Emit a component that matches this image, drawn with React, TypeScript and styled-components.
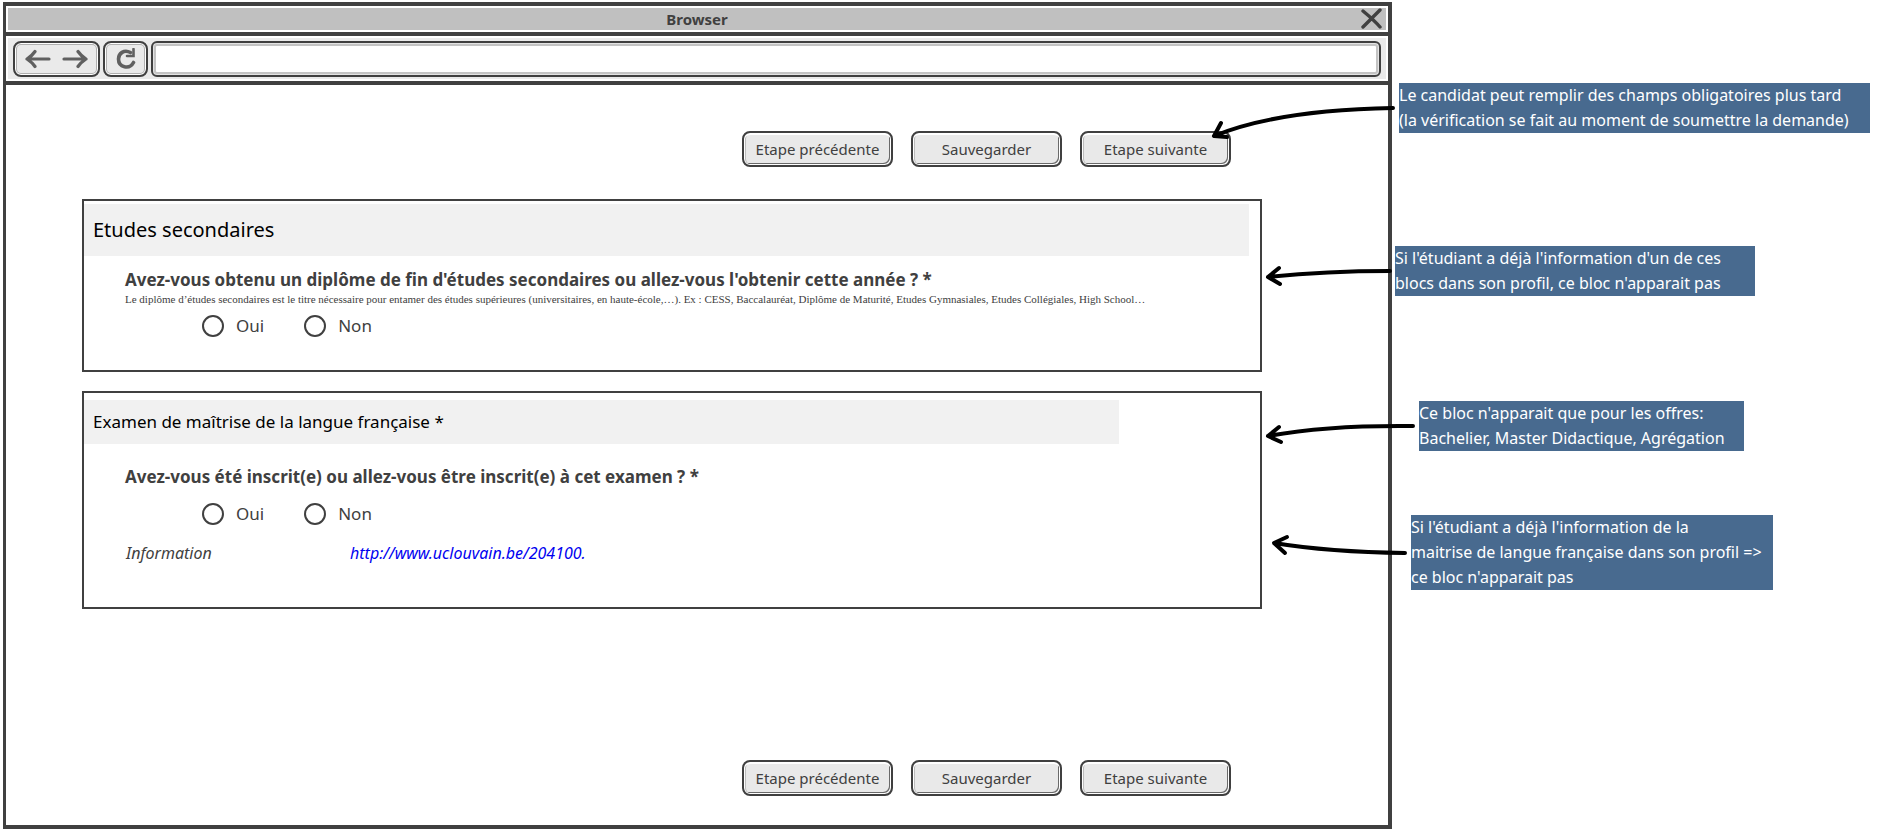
import React from "react";
import styled, { createGlobalStyle } from "styled-components";

const ink = "#404040";
const hand = `"Noto Sans", "Open Sans", sans-serif`;

const GlobalStyle = createGlobalStyle`
  *, *::before, *::after { box-sizing: border-box; }
  body { margin: 0; background: #fff; color: ${ink}; font-family: ${hand}; }
`;

const Page = styled.div`
  display: grid;
  grid-template-columns: minmax(0, 1fr) 496px;
  min-height: 100vh;
`;

const Frame = styled.main`
  display: flex;
  flex-direction: column;
  margin: 2px 0 5px 3px;
  border: solid ${ink};
  border-width: 4px 4px 4px 3px;
`;

const TitleBar = styled.header`
  display: grid;
  grid-template-columns: 28px 1fr 28px;
  align-items: center;
  height: 26px;
  border: 2px solid #fff;
  background: #c0c0c0;
`;

const WindowTitle = styled.h1`
  grid-column: 2;
  margin: 0;
  font-size: 15px;
  line-height: 22px;
  text-align: center;
`;

const IconButton = styled.button`
  display: flex;
  align-items: center;
  justify-content: center;
  padding: 0;
  border: 0;
  background: none;
  color: ${ink};
`;

const Toolbar = styled.div`
  display: flex;
  align-items: center;
  gap: 3px;
  height: 53px;
  padding: 0 7px;
  border: solid ${ink};
  border-width: 4px 0;
  box-shadow: inset 0 0 0 2px #fff;
  background: #eaeaea;
`;

const ToolGroup = styled.div<{ $width: number }>`
  display: flex;
  align-items: center;
  justify-content: space-evenly;
  width: ${(p) => p.$width}px;
  height: 36px;
  border: 2px solid ${ink};
  border-radius: 8px;
  box-shadow: inset 0 0 0 1px #fff, inset 0 0 0 2px #b0b0b0;
  color: #606060;

  ${IconButton} { color: inherit; }
`;

const Address = styled.input`
  flex: 1;
  min-width: 0;
  height: 36px;
  padding: 0 10px;
  border: 2px solid ${ink};
  border-radius: 6px;
  box-shadow: inset 0 0 0 1px #e4e4e4, inset 0 0 0 3px #c4c4c4;
  background: #fff;
  font: 16px ${hand};
`;

const Content = styled.div`
  flex: 1;
  display: flex;
  flex-direction: column;
  padding: 46px 126px 29px 76px;
`;

const Actions = styled.nav`
  display: flex;
  justify-content: flex-end;
  gap: 18px;
  padding-right: 31px;

  &:last-child { margin-top: auto; }
`;

const ActionButton = styled.button`
  width: 151px;
  height: 36px;
  padding: 0;
  border: 2px solid ${ink};
  border-radius: 8px;
  background: #e9e9e9;
  box-shadow: inset 0 2px 0 #fff, inset 1px 0 0 #fff, inset -1px -1px 0 #fff,
    inset 2px 0 0 #bdbdbd, inset -2px -2px 0 #6a6a6a;
  color: ${ink};
  font: 15px ${hand};
  white-space: nowrap;
`;

const Card = styled.section<{ $top: number; $bottom: number; $gap: number }>`
  margin-top: ${(p) => p.$gap}px;
  padding: ${(p) => p.$top}px 0 ${(p) => p.$bottom}px;
  border: 2px solid ${ink};
`;

const CardTitle = styled.h2<{ $size: number; $height: number; $right: number }>`
  margin: 0 ${(p) => p.$right}px 0 0;
  padding-left: 9px;
  background: #f1f1f1;
  color: #000;
  font-size: ${(p) => p.$size}px;
  font-weight: 400;
  line-height: ${(p) => p.$height}px;
`;

const Question = styled.fieldset<{ $top: number }>`
  margin: 0;
  padding: ${(p) => p.$top}px 0 0 41px;
  border: 0;
  min-width: 0;
`;

const Legend = styled.legend`
  float: left;
  width: 100%;
  padding: 0;
  font-size: 17px;
  font-weight: 700;
  line-height: 24px;
`;

const Hint = styled.p`
  clear: both;
  margin: 0;
  font: 11px/14px "Liberation Serif", serif;
`;

const Choices = styled.div<{ $gap: number }>`
  clear: both;
  display: flex;
  gap: 40px;
  padding: ${(p) => p.$gap}px 0 0 77px;
`;

const Choice = styled.label`
  display: flex;
  align-items: center;
  gap: 12px;
  font-size: 17px;
  line-height: 24px;
`;

const Radio = styled.input`
  appearance: none;
  width: 22px;
  height: 22px;
  margin: 0;
  border: 2px solid ${ink};
  border-radius: 50%;
  background: #fff;

  &:checked { box-shadow: inset 0 0 0 4px #fff; background: ${ink}; }
`;

const InfoRow = styled.div`
  display: grid;
  grid-template-columns: 224px 1fr;
  padding: 15px 0 0 42px;
  font-size: 16px;
  font-style: italic;
  line-height: 24px;
`;

const InfoLink = styled.a`
  color: #0000f0;
  text-decoration: none;
`;

const Notes = styled.aside`
  padding-top: 83px;
`;

const Note = styled.p<{ $indent: number; $width: number; $gap: number }>`
  position: relative;
  width: ${(p) => p.$width}px;
  margin: ${(p) => p.$gap}px 0 0 ${(p) => p.$indent}px;
  background: #486a8f;
  color: #fff;
  font-size: 16px;
  line-height: 25px;
  white-space: nowrap;
`;

const Arrow = styled.svg`
  position: absolute;
  top: 0;
  right: 100%;
  width: 200px;
  height: 60px;
  overflow: visible;
  pointer-events: none;
  fill: none;
  stroke: #000;
  stroke-width: 4;
  stroke-linecap: round;
  stroke-linejoin: round;
`;

const notes = [
  {
    indent: 7, width: 471, gap: 0,
    lines: [
      "Le candidat peut remplir des champs obligatoires plus tard",
      "(la vérification se fait au moment de soumettre la demande)",
    ],
    arrow: "M-6 25Q-122 27-185 53M-178 40L-185 53L-172 54",
  },
  {
    indent: 3, width: 360, gap: 113,
    lines: [
      "Si l'étudiant a déjà l'information d'un de ces",
      "blocs dans son profil, ce bloc n'apparait pas",
    ],
    arrow: "M-5 25Q-70 25-127 31M-116 22L-127 31L-115 38",
  },
  {
    indent: 27, width: 325, gap: 105,
    lines: [
      "Ce bloc n'apparait que pour les offres:",
      "Bachelier, Master Didactique, Agrégation",
    ],
    arrow: "M-6 25Q-92 24-151 35M-140 26L-151 35L-138 41",
  },
  {
    indent: 19, width: 362, gap: 64,
    lines: [
      "Si l'étudiant a déjà l'information de la",
      "maitrise de langue française dans son profil =>",
      "ce bloc n'apparait pas",
    ],
    arrow: "M-6 38Q-82 37-137 28M-124 22L-137 28L-126 38",
  },
];

function StepActions({ label }: { label: string }) {
  return (
    <Actions aria-label={label}>
      <ActionButton type="button">Etape précédente</ActionButton>
      <ActionButton type="button">Sauvegarder</ActionButton>
      <ActionButton type="button">Etape suivante</ActionButton>
    </Actions>
  );
}

function YesNo({ name, gap }: { name: string; gap: number }) {
  return (
    <Choices $gap={gap}>
      {["Oui", "Non"].map((answer) => (
        <Choice key={answer}>
          <Radio type="radio" name={name} value={answer} />
          {answer}
        </Choice>
      ))}
    </Choices>
  );
}

export default function App() {
  return (
    <>
      <GlobalStyle />
      <Page>
        <Frame>
          <TitleBar>
            <WindowTitle>Browser</WindowTitle>
            <IconButton type="button" aria-label="Fermer">
              <svg width="22" height="22" viewBox="0 0 22 22" fill="none" stroke="currentColor" strokeWidth="3.4" strokeLinecap="round">
                <path d="M2 3C8 8 14 13 19 19M19 2C13 8 8 13 2 19" />
              </svg>
            </IconButton>
          </TitleBar>
          <Toolbar>
            <ToolGroup $width={87}>
              <IconButton type="button" aria-label="Page précédente">
                <svg width="26" height="22" viewBox="0 0 26 22" fill="none" stroke="currentColor" strokeWidth="3.2" strokeLinecap="round" strokeLinejoin="round">
                  <path d="M24 11H2M10 3.5C8 6.500 5 9 2 11C5 13 8 15.500 10 18.500" />
                </svg>
              </IconButton>
              <IconButton type="button" aria-label="Page suivante">
                <svg width="26" height="22" viewBox="0 0 26 22" fill="none" stroke="currentColor" strokeWidth="3.2" strokeLinecap="round" strokeLinejoin="round">
                  <path d="M2 11H24M16 3.5C18 6.500 21 9 24 11C21 13 18 15.500 16 18.500" />
                </svg>
              </IconButton>
            </ToolGroup>
            <ToolGroup $width={45}>
              <IconButton type="button" aria-label="Actualiser">
                <svg width="22" height="22" viewBox="0 0 22 22" fill="none" stroke="currentColor" strokeLinecap="round">
                  <path d="M15.500 4.500C9 1 3.500 5.500 3.500 11C3.500 19.500 14.500 22 18.500 14.500" strokeWidth="3.600" />
                  <path d="M18.500 1V8H12" strokeWidth="2.600" />
                </svg>
              </IconButton>
            </ToolGroup>
            <Address type="text" aria-label="Adresse" />
          </Toolbar>
          <Content>
            <StepActions label="Etapes, haut de page" />
            <Card $gap={32} $top={3} $bottom={32}>
              <CardTitle $size={20} $height={52} $right={11}>Etudes secondaires</CardTitle>
              <Question $top={12}>
                <Legend>Avez-vous obtenu un diplôme de fin d'études secondaires ou allez-vous l'obtenir cette année ? *</Legend>
                <Hint>
                  Le diplôme d’études secondaires est le titre nécessaire pour entamer des études supérieures (universitaires, en haute-école,…). Ex : CESS, Baccalauréat, Diplôme de Maturité, Etudes Gymnasiales, Etudes Collégiales, High School…
                </Hint>
                <YesNo name="diplome" gap={8} />
              </Question>
            </Card>
            <Card $gap={19} $top={7} $bottom={42}>
              <CardTitle $size={17} $height={44} $right={141}>Examen de maîtrise de la langue française *</CardTitle>
              <Question $top={21}>
                <Legend>Avez-vous été inscrit(e) ou allez-vous être inscrit(e) à cet examen ? *</Legend>
                <YesNo name="examen" gap={13} />
              </Question>
              <InfoRow>
                <span>Information</span>
                <span><InfoLink href="http://www.uclouvain.be/204100">http://www.uclouvain.be/204100.</InfoLink></span>
              </InfoRow>
            </Card>
            <StepActions label="Etapes, bas de page" />
          </Content>
        </Frame>
        <Notes>
          {notes.map((note) => (
            <Note key={note.lines[0]} $indent={note.indent} $width={note.width} $gap={note.gap}>
              {note.lines.map((line, i) => (
                <React.Fragment key={line}>
                  {i > 0 && <br />}
                  {line}
                </React.Fragment>
              ))}
              <Arrow viewBox="-200 0 200 60" aria-hidden="true">
                <path d={note.arrow} />
              </Arrow>
            </Note>
          ))}
        </Notes>
      </Page>
    </>
  );
}
